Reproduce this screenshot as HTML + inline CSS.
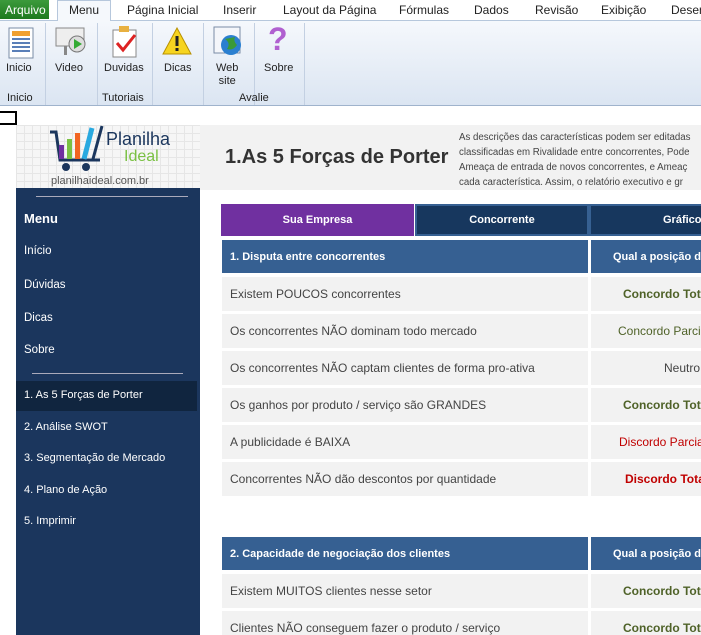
<!DOCTYPE html>
<html><head><meta charset="utf-8"><style>
*{margin:0;padding:0;box-sizing:border-box}
html,body{width:701px;height:635px;overflow:hidden}
body{background:#fff;font-family:"Liberation Sans","DejaVu Sans",sans-serif;position:relative;font-size:12px}
.a{position:absolute}
.tabs{top:0;left:0;width:701px;height:20px;background:#fff}
.tab{position:absolute;top:3px;font-size:12px;color:#222}
.rib{top:20px;left:0;width:701px;height:86px;background:linear-gradient(#f5f8fc,#dbe5f2);border-top:1px solid #b6c7dc;border-bottom:1px solid #9fb3cc}
.lbl{position:absolute;font-size:11px;color:#222;text-align:center}
.sep{position:absolute;top:2px;width:1px;height:82px;background:#c3d0e2}
.nav{left:16px;top:188px;width:184px;height:447px;background:#1b365d}
.ni{position:absolute;left:24px;color:#fff;font-size:11.5px}
.row{position:absolute;left:222px;width:366px;height:34px;background:#f2f2f2;color:#444;font-size:12px;padding:10px 0 0 8px}
.rv{position:absolute;left:591px;width:110px;height:34px;background:#f2f2f2;font-size:12px;padding:10px 0 0 27px;white-space:nowrap;overflow:hidden}
.hd{position:absolute;left:222px;width:366px;height:33px;background:#366092;color:#fff;font-weight:bold;font-size:11px;padding:11px 0 0 8px}
.hv{position:absolute;left:591px;width:110px;height:33px;background:#366092;color:#fff;font-weight:bold;font-size:11px;padding:11px 0 0 22px;white-space:nowrap;overflow:hidden}
.g{color:#4f6228;font-weight:bold}.gp{color:#4f6228}.r{color:#c00000}.rb{color:#c00000;font-weight:bold}
</style></head><body>
<div class="a tabs"></div>
<div class="a" style="left:0;top:0;width:49px;height:19px;background:linear-gradient(#3c9a3c,#1e7a1e);color:#fff;font-size:12px;padding:3px 0 0 5px">Arquivo</div>
<div class="a" style="left:57px;top:0;width:54px;height:21px;background:#f5f8fc;border:1px solid #b6c7dc;border-bottom:none;z-index:2"></div>
<div class="tab" style="left:69px;z-index:3">Menu</div>
<div class="tab" style="left:127px">Página Inicial</div>
<div class="tab" style="left:223px">Inserir</div>
<div class="tab" style="left:283px">Layout da Página</div>
<div class="tab" style="left:399px">Fórmulas</div>
<div class="tab" style="left:474px">Dados</div>
<div class="tab" style="left:535px">Revisão</div>
<div class="tab" style="left:601px">Exibição</div>
<div class="tab" style="left:671px">Desen</div>
<div class="a rib">
 <svg class="a" style="left:8px;top:6px" width="26" height="32"><rect x="1" y="1" width="24" height="30" fill="#fff" stroke="#7a8ca6"/><rect x="4" y="4" width="18" height="5" fill="#f0a030"/><rect x="4" y="11" width="18" height="2" fill="#5a7fb8"/><rect x="4" y="15" width="18" height="2" fill="#5a7fb8"/><rect x="4" y="19" width="18" height="2" fill="#5a7fb8"/><rect x="4" y="23" width="18" height="2" fill="#5a7fb8"/></svg>
 <div class="lbl" style="left:6px;top:41px">Inicio</div>
 <div class="lbl" style="left:7px;top:71px">Inicio</div>
 <div class="sep" style="left:45px"></div>
 <svg class="a" style="left:54px;top:5px" width="34" height="32"><rect x="2" y="2" width="28" height="18" fill="#eee" stroke="#888"/><circle cx="23" cy="18" r="8" fill="#ddd" stroke="#777"/><path d="M20 13 L28 18 L20 23Z" fill="#3a3"/><rect x="10" y="20" width="3" height="9" fill="#888"/></svg>
 <div class="lbl" style="left:55px;top:41px">Video</div>
 <div class="sep" style="left:97px"></div>
 <svg class="a" style="left:111px;top:4px" width="28" height="34"><rect x="2" y="5" width="23" height="27" fill="#fff" stroke="#888"/><rect x="8" y="1" width="10" height="6" fill="#e8b040"/><path d="M6 18 L12 25 L24 10" stroke="#d22" stroke-width="3" fill="none"/></svg>
 <div class="lbl" style="left:104px;top:41px">Duvidas</div>
 <div class="sep" style="left:152px"></div>
 <svg class="a" style="left:162px;top:6px" width="30" height="28"><path d="M15 1 L29 27 L1 27Z" fill="#f6d420" stroke="#b89000"/><rect x="13.5" y="9" width="3" height="10" fill="#222"/><rect x="13.5" y="21" width="3" height="3" fill="#222"/></svg>
 <div class="lbl" style="left:164px;top:41px">Dicas</div>
 <div class="sep" style="left:203px"></div>
 <svg class="a" style="left:213px;top:5px" width="30" height="32"><rect x="1" y="1" width="26" height="26" fill="#f4f6fa" stroke="#7a8ca6"/><circle cx="18" cy="19" r="10" fill="#2a7fd0"/><path d="M12 13 Q18 17 14 23 Q20 25 24 19 Q20 15 22 11Z" fill="#3a9a3a"/></svg>
 <div class="lbl" style="left:216px;top:41px;line-height:13px">Web<br>site</div>
 <div class="sep" style="left:254px"></div>
 <div class="a" style="left:268px;top:0px;font-size:32px;font-weight:bold;color:#b060d0">?</div>
 <div class="lbl" style="left:264px;top:41px">Sobre</div>
 <div class="lbl" style="left:102px;top:71px">Tutoriais</div>
 <div class="lbl" style="left:239px;top:71px">Avalie</div>
 <div class="sep" style="left:304px"></div>
</div>
<div class="a" style="left:0;top:111px;width:17px;height:14px;border:2px solid #000;border-left:none"></div>
<div class="a" style="left:16px;top:125px;width:184px;height:63px;background-color:#f6f6f6;background-image:linear-gradient(#e6e6e6 1px,transparent 1px),linear-gradient(90deg,#e6e6e6 1px,transparent 1px);background-size:8px 8px"></div>
<svg class="a" style="left:48px;top:125px" width="60" height="50"><path d="M2 7 L8 7 L12 35 L52 35" stroke="#1b365d" stroke-width="3" fill="none"/><rect x="11" y="20" width="5" height="14" fill="#7030a0"/><rect x="19" y="14" width="5" height="20" fill="#7ac143"/><rect x="27" y="8" width="5" height="26" fill="#f26522"/><path d="M36 34 L44 3" stroke="#29a9e0" stroke-width="5"/><path d="M45 34 L54 1" stroke="#1b365d" stroke-width="3"/><circle cx="18" cy="42" r="4" fill="#1b365d"/><circle cx="38" cy="42" r="4" fill="#1b365d"/></svg>
<div class="a" style="left:106px;top:129px;font-size:18px;color:#1b365d">Planilha</div>
<div class="a" style="left:124px;top:148px;font-size:16px;color:#7ac143">Ideal</div>
<div class="a" style="left:51px;top:175px;font-size:11px;color:#555">planilhaideal.com.br</div>
<div class="a" style="left:200px;top:125px;width:501px;height:65px;background:#f2f2f2"></div>
<div class="a" style="left:225px;top:146px;font-size:20px;font-weight:bold;color:#333">1.As 5 Forças de Porter</div>
<div class="a" style="left:459px;top:130px;font-size:9.7px;line-height:15px;color:#444;white-space:nowrap">As descrições das características podem ser editadas<br>classificadas em Rivalidade entre concorrentes, Pode<br>Ameaça de entrada de novos concorrentes, e Ameaç<br>cada característica. Assim, o relatório executivo e gr</div>
<div class="a nav"></div>
<div class="a" style="left:36px;top:196px;width:152px;height:1px;background:#aab"></div>
<div class="ni" style="top:211px;font-weight:bold;font-size:13px">Menu</div>
<div class="ni" style="top:245px">Início</div>
<div class="ni" style="top:279px">Dúvidas</div>
<div class="ni" style="top:312px">Dicas</div>
<div class="ni" style="top:344px">Sobre</div>
<div class="a" style="left:32px;top:373px;width:151px;height:1px;background:#aab"></div>
<div class="a" style="left:16px;top:381px;width:181px;height:30px;background:#10253f"></div>
<div class="ni" style="top:389px;font-size:11px">1. As 5 Forças de Porter</div>
<div class="ni" style="top:421px;font-size:11px">2. Análise SWOT</div>
<div class="ni" style="top:452px;font-size:11px">3. Segmentação de Mercado</div>
<div class="ni" style="top:484px;font-size:11px">4. Plano de Ação</div>
<div class="ni" style="top:515px;font-size:11px">5. Imprimir</div>
<div class="a" style="left:221px;top:204px;width:193px;height:32px;background:#7030a0;color:#fff;font-size:11px;font-weight:bold;text-align:center;padding-top:10px">Sua Empresa</div>
<div class="a" style="left:415px;top:204px;width:174px;height:32px;background:#17375e;border:2px solid #366092;color:#fff;font-size:11px;font-weight:bold;text-align:center;padding-top:8px">Concorrente</div>
<div class="a" style="left:589px;top:204px;width:112px;height:32px;background:#17375e;border:2px solid #366092;border-right:none;color:#fff;font-size:11px;font-weight:bold;padding:8px 0 0 72px">Gráficos</div>
<div class="hd" style="top:240px">1. Disputa entre concorrentes</div>
<div class="hv" style="top:240px">Qual a posição da</div>
<div class="row" style="top:277px">Existem POUCOS concorrentes</div><div class="rv g" style="top:277px;padding-left:32px">Concordo Total</div>
<div class="row" style="top:314px">Os concorrentes NÃO dominam todo mercado</div><div class="rv gp" style="top:314px">Concordo Parcial</div>
<div class="row" style="top:351px">Os concorrentes NÃO captam clientes de forma pro-ativa</div><div class="rv" style="top:351px;padding-left:73px;color:#444">Neutro</div>
<div class="row" style="top:388px">Os ganhos por produto / serviço são GRANDES</div><div class="rv g" style="top:388px;padding-left:32px">Concordo Total</div>
<div class="row" style="top:425px">A publicidade é BAIXA</div><div class="rv r" style="top:425px;padding-left:28px">Discordo Parcial</div>
<div class="row" style="top:462px">Concorrentes NÃO dão descontos por quantidade</div><div class="rv rb" style="top:462px;padding-left:34px">Discordo Total</div>
<div class="hd" style="top:537px">2. Capacidade de negociação dos clientes</div>
<div class="hv" style="top:537px">Qual a posição da</div>
<div class="row" style="top:574px">Existem MUITOS clientes nesse setor</div><div class="rv g" style="top:574px;padding-left:32px">Concordo Total</div>
<div class="row" style="top:611px">Clientes NÃO conseguem fazer o produto / serviço</div><div class="rv g" style="top:611px;padding-left:32px">Concordo Total</div>
</body></html>
